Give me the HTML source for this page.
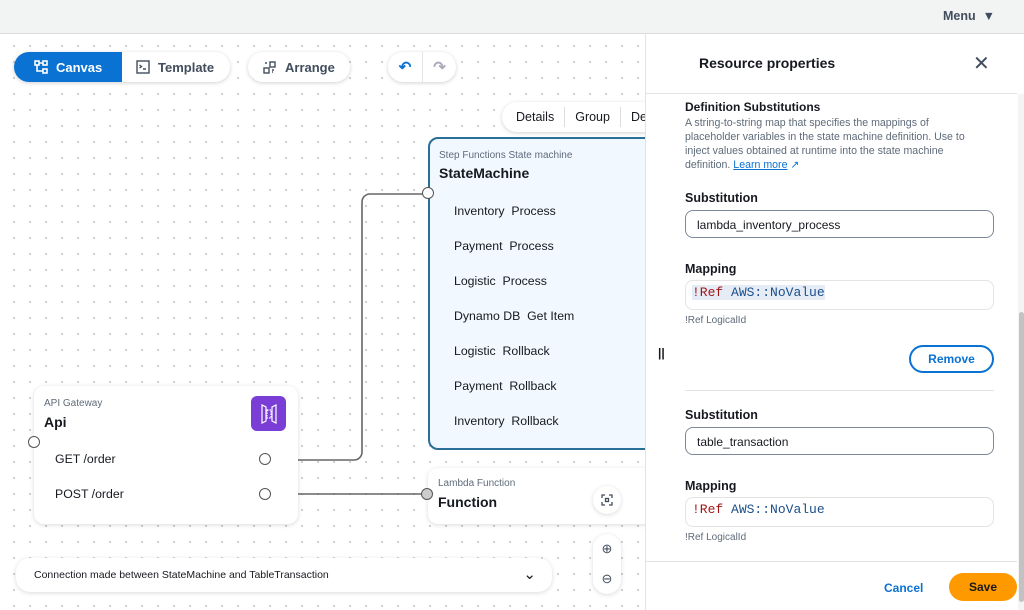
<!DOCTYPE html>
<html><head><style>
*{box-sizing:border-box;margin:0;padding:0}
body{width:1024px;height:610px;overflow:hidden;font-family:"Liberation Sans",sans-serif;position:relative;background:#fff;color:#16191f}
.abs{position:absolute}
#top{left:0;top:0;width:1024px;height:34px;background:#f2f3f3;border-bottom:1px solid #ddd}
#canvas{left:0;top:34px;width:645px;height:576px;background-color:#fff;background-image:radial-gradient(#c8ccd0 1px,transparent 1.2px);background-size:16px 16px;background-position:6px 4px}
.pill{background:#fff;border-radius:16px;box-shadow:0 1px 4px rgba(0,0,0,.18);font-weight:bold;font-size:13px;color:#414d5c;display:flex;align-items:center}
.card{background:#fff;border-radius:10px;box-shadow:0 1px 5px rgba(0,0,0,.15)}
.port{position:absolute;width:12px;height:12px;border:1.5px solid #555;border-radius:50%;background:#fff}
.small{font-size:10px;color:#5f6b7a}
.item{position:absolute;left:24px;font-size:12.3px;color:#16191f}
#panel{left:645px;top:34px;width:379px;height:576px;background:#fff;border-left:1px solid #e3e3e3}
.lbl{position:absolute;left:39px;font-weight:bold;font-size:12.5px}
.inp{position:absolute;left:39px;width:309px;height:28px;border:1.5px solid #7d8998;border-radius:8px;font-size:12px;padding:7px 11px}
.code{position:absolute;left:39px;width:309px;height:30px;border:1px solid #e3e3e3;border-radius:8px;font-family:"Liberation Mono",monospace;font-size:13px;padding:4px 6px}
.hint{position:absolute;left:39px;font-size:10px;color:#5f6b7a}
</style></head><body>
<div id="top" class="abs"><div class="abs" style="left:943px;top:9px;font-size:12.5px;font-weight:bold;color:#414d5c">Menu&nbsp;&nbsp;▼</div></div>
<div id="canvas" class="abs"></div>

<div class="abs pill" style="left:14px;top:52px;width:216px;height:30px;overflow:hidden">
 <div style="width:108px;height:30px;background:#0972d3;color:#fff;display:flex;align-items:center;padding-left:20px;gap:8px">
  <svg width="14" height="14" viewBox="0 0 14 14" fill="none" stroke="#fff" stroke-width="1.6"><rect x="1" y="1" width="4" height="4"/><rect x="9" y="1" width="4" height="4"/><rect x="9" y="9" width="4" height="4"/><path d="M3 5v6h6M5 3h4"/></svg>Canvas</div>
 <div style="display:flex;align-items:center;gap:8px;padding-left:14px"><svg width="14" height="14" viewBox="0 0 14 14" fill="none" stroke="#414d5c" stroke-width="1.4"><rect x="1" y="1" width="12" height="12"/><path d="M3.5 5l2 1.5-2 1.5M7 9h3"/></svg>Template</div>
</div>
<div class="abs pill" style="left:248px;top:52px;width:102px;height:30px;padding-left:15px;gap:9px"><svg width="13" height="13" viewBox="0 0 13 13" fill="none" stroke="#414d5c" stroke-width="1.4"><rect x="7" y="1" width="5" height="5"/><rect x="1" y="7" width="5" height="5"/><path d="M2 2h2M9 9h2M9 11h1"/></svg>Arrange</div>
<div class="abs pill" style="left:388px;top:52px;width:68px;height:30px"><div style="width:34px;text-align:center;color:#0972d3;font-size:15px">↶</div><div style="width:1px;height:30px;background:#e5e5e5"></div><div style="width:33px;text-align:center;color:#aab;font-size:15px">↷</div></div>

<div class="abs pill" style="left:502px;top:102px;width:160px;height:30px;font-weight:normal;font-size:12.5px;color:#16191f;padding-left:14px">Details<span style="width:1px;height:20px;background:#ddd;margin:0 10px"></span>Group<span style="width:1px;height:20px;background:#ddd;margin:0 10px"></span>De</div>

<svg class="abs" style="left:0;top:0" width="645" height="610"><path d="M270 460H354a8 8 0 0 0 8-8V202a8 8 0 0 1 8-8h58M270 494H428" fill="none" stroke="#666" stroke-width="1.6"/></svg>

<div class="abs" style="left:428px;top:137px;width:230px;height:313px;background:#f1f8ff;border:2px solid #2a6f97;border-radius:10px">
 <div class="small" style="position:absolute;left:9px;top:11px">Step Functions State machine</div>
 <div style="position:absolute;left:9px;top:26px;font-weight:bold;font-size:14px">StateMachine</div>
 <div class="item" style="top:65px">Inventory&nbsp; Process</div>
 <div class="item" style="top:100px">Payment&nbsp; Process</div>
 <div class="item" style="top:135px">Logistic&nbsp; Process</div>
 <div class="item" style="top:170px">Dynamo DB&nbsp; Get Item</div>
 <div class="item" style="top:205px">Logistic&nbsp; Rollback</div>
 <div class="item" style="top:240px">Payment&nbsp; Rollback</div>
 <div class="item" style="top:275px">Inventory&nbsp; Rollback</div>
</div>
<div class="port" style="left:422px;top:187px"></div>

<div class="abs card" style="left:34px;top:386px;width:264px;height:138px">
 <div class="small" style="position:absolute;left:10px;top:12px">API Gateway</div>
 <div style="position:absolute;left:10px;top:28px;font-weight:bold;font-size:14px">Api</div>
 <div style="position:absolute;left:217px;top:10px;width:35px;height:35px;border-radius:6px;background:#7a3dd6;display:flex;align-items:center;justify-content:center"><svg width="24" height="24" viewBox="0 0 24 24" fill="none" stroke="#fff" stroke-width="1.2"><path d="M5 3v18l4-2V5zM19 3v18l-4-2V5z"/><rect x="10" y="8" width="4" height="8" stroke-dasharray="1.5 1"/></svg></div>
 <div style="position:absolute;left:21px;top:66px;font-size:12.3px">GET /order</div>
 <div style="position:absolute;left:21px;top:101px;font-size:12.3px">POST /order</div>
</div>
<div class="port" style="left:28px;top:436px"></div>
<div class="port" style="left:259px;top:453px"></div>
<div class="port" style="left:259px;top:488px"></div>

<div class="abs card" style="left:428px;top:468px;width:230px;height:56px;border-radius:10px 0 0 10px">
 <div class="small" style="position:absolute;left:10px;top:10px">Lambda Function</div>
 <div style="position:absolute;left:10px;top:26px;font-weight:bold;font-size:14px">Function</div>
</div>
<div class="port" style="left:421px;top:488px;background:#ccc"></div>
<div class="abs card" style="left:593px;top:486px;width:28px;height:28px;border-radius:14px;display:flex;align-items:center;justify-content:center"><svg width="12" height="12" viewBox="0 0 12 12" fill="none" stroke="#414d5c" stroke-width="1.3"><path d="M1 4V1h3M8 1h3v3M11 8v3H8M4 11H1V8"/><rect x="4.5" y="4.5" width="3" height="3"/></svg></div>
<div class="abs card" style="left:593px;top:534px;width:28px;height:60px;border-radius:14px;color:#414d5c;font-size:13px;text-align:center;line-height:30px">⊕<br>⊖</div>

<div class="abs card" style="left:16px;top:558px;width:536px;height:34px;border-radius:14px;font-size:10.5px;padding:11px 18px">Connection made between StateMachine and TableTransaction<span style="position:absolute;right:16px;top:7px;font-size:15px">⌄</span></div>

<div id="panel" class="abs">
 <div style="position:absolute;left:53px;top:21px;font-weight:bold;font-size:14px">Resource properties</div>
 <div style="position:absolute;left:327px;top:17px;font-size:20px;color:#414d5c">✕</div>
 <div style="position:absolute;left:0;top:59px;width:371px;height:1px;background:#e3e3e3"></div>
 <div style="position:absolute;left:372px;top:60px;width:7px;height:516px;background:#f4f4f4"></div>
 <div style="position:absolute;left:373px;top:278px;width:5px;height:290px;background:#c2c2c2;border-radius:3px"></div>
 <div class="lbl" style="top:66px;font-size:12px">Definition Substitutions</div>
 <div class="hint" style="top:82px;width:296px;line-height:14px;font-size:10.6px">A string-to-string map that specifies the mappings of placeholder variables in the state machine definition. Use to inject values obtained at runtime into the state machine definition. <span style="color:#0972d3;text-decoration:underline">Learn more</span> <span style="color:#0972d3">↗</span></div>
 <div class="lbl" style="top:157px">Substitution</div>
 <div class="inp" style="top:176px">lambda_inventory_process</div>
 <div class="lbl" style="top:228px">Mapping</div>
 <div class="code" style="top:246px"><span style="background:#e6ecf5"><span style="color:#a31515">!Ref</span> <span style="color:#1a4f8b">AWS::NoValue</span></span></div>
 <div class="hint" style="top:281px">!Ref LogicalId</div>
 <div style="position:absolute;left:12px;top:312px;font-size:12px;font-weight:bold">||</div>
 <div style="position:absolute;left:263px;top:311px;width:85px;height:28px;border:2px solid #0972d3;border-radius:14px;color:#0972d3;font-weight:bold;font-size:12px;text-align:center;line-height:24px">Remove</div>
 <div style="position:absolute;left:39px;top:356px;width:309px;height:1px;background:#e3e3e3"></div>
 <div class="lbl" style="top:374px">Substitution</div>
 <div class="inp" style="top:393px">table_transaction</div>
 <div class="lbl" style="top:445px">Mapping</div>
 <div class="code" style="top:463px"><span style="color:#a31515">!Ref</span> <span style="color:#1a4f8b">AWS::NoValue</span></div>
 <div class="hint" style="top:498px">!Ref LogicalId</div>
 <div style="position:absolute;left:0;top:527px;width:371px;height:1px;background:#e3e3e3"></div>
 <div style="position:absolute;left:238px;top:547px;font-weight:bold;font-size:12px;color:#0972d3">Cancel</div>
 <div style="position:absolute;left:303px;top:539px;width:68px;height:28px;border-radius:14px;background:#ff9900;font-weight:bold;font-size:12px;text-align:center;line-height:28px">Save</div>
</div>
</body></html>
